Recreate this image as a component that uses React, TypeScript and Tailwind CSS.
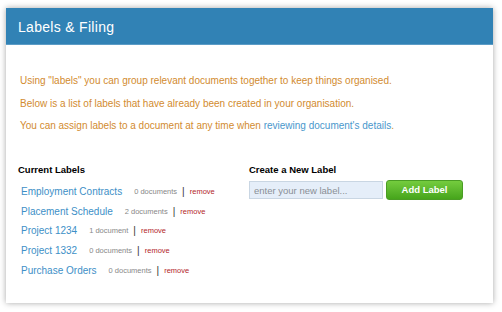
const labels = [
    { name: "Employment Contracts", count: "0 documents" },
    { name: "Placement Schedule", count: "2 documents" },
    { name: "Project 1234", count: "1 document" },
    { name: "Project 1332", count: "0 documents" },
    { name: "Purchase Orders", count: "0 documents" },
];

export default function App() {
    return (
        <div
            className="w-[502px] h-[312px] bg-white pt-[8px] pl-[6px]"
            style={{ fontFamily: '"Liberation Sans", Arial, sans-serif' }}
        >
            <div className="w-[487px] h-[295px] bg-white shadow-[0_0_6px_rgba(0,0,0,0.35)] flex flex-col">
                {/* header */}
                <div className="h-[37px] bg-[#3182b5] border-b border-[#5c9cc6] flex items-center pl-[12px] pt-[2px]">
                    <h1 className="text-[14px] text-white tracking-[0.3px]">Labels &amp; Filing</h1>
                </div>

                {/* intro */}
                <div className="pl-[14px] pt-[30px] flex flex-col gap-[10.5px] text-[10px] leading-[12px] text-[#d28b2f]">
                    <p>Using "labels" you can group relevant documents together to keep things organised.</p>
                    <p>Below is a list of labels that have already been created in your organisation.</p>
                    <p>
                        You can assign labels to a document at any time when{" "}
                        <span className="text-[#4a97cc]">reviewing document's details</span>.
                    </p>
                </div>

                <div className="flex pt-[32px]">
                    {/* current labels */}
                    <div className="w-[231px] pl-[12px]">
                        <h2 className="text-[9.5px] font-bold text-black leading-[12px]">Current Labels</h2>
                        <ul className="mt-[9px] pl-[3px] flex flex-col gap-[6.7px]">
                            {labels.map((l) => (
                                <li key={l.name} className="flex items-center h-[13px]">
                                    <span className="text-[10px] text-[#3d8fc7]">{l.name}</span>
                                    <span className="ml-[12px] text-[7.5px] text-[#888]">{l.count}</span>
                                    <span className="mx-[5px] text-[10px] text-[#333]">|</span>
                                    <span className="text-[7.5px] text-[#b3262a]">remove</span>
                                </li>
                            ))}
                        </ul>
                    </div>

                    {/* new label */}
                    <div className="pl-[12px]">
                        <h2 className="text-[9.5px] font-bold text-black leading-[12px]">Create a New Label</h2>
                        <div className="mt-[4px] flex items-center gap-[3px]">
                            <input
                                placeholder="enter your new label..."
                                className="w-[134px] h-[18px] bg-[#e5eef9] border border-[#c9d6e3] px-[4px] text-[9.5px] text-[#555] placeholder:text-[#8a8f96] outline-none"
                            />
                            <button className="w-[77px] h-[20px] rounded-[3px] bg-gradient-to-b from-[#74cc3e] to-[#46a51b] border border-[#4a9d24] text-white text-[9.5px] font-bold">
                                Add Label
                            </button>
                        </div>
                    </div>
                </div>
            </div>
        </div>
    );
}
